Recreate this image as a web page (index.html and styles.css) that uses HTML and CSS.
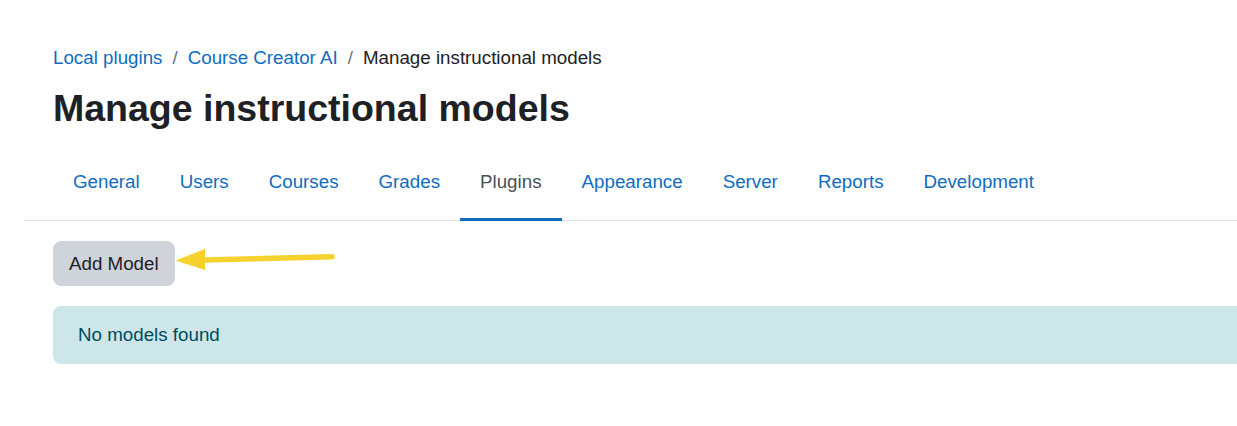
FILE: index.html
```html
<!DOCTYPE html>
<html lang="en">
<head>
<meta charset="utf-8">
<title>Manage instructional models</title>
<link rel="stylesheet" href="styles.css">
</head>
<body>
<div class="page">
  <div class="header">
    <nav class="breadcrumb">
      <a href="#">Local plugins</a>
      <span class="sep">/</span>
      <a href="#">Course Creator AI</a>
      <span class="sep">/</span>
      <span class="current">Manage instructional models</span>
    </nav>
    <h1 class="title">Manage instructional models</h1>
  </div>
  <ul class="tabs">
    <li><a class="tab" href="#">General</a></li>
    <li><a class="tab" href="#">Users</a></li>
    <li><a class="tab" href="#">Courses</a></li>
    <li><a class="tab" href="#">Grades</a></li>
    <li><a class="tab active" href="#">Plugins</a></li>
    <li><a class="tab" href="#">Appearance</a></li>
    <li><a class="tab" href="#">Server</a></li>
    <li><a class="tab" href="#">Reports</a></li>
    <li><a class="tab" href="#">Development</a></li>
  </ul>
  <div class="content">
    <div class="actions">
      <button class="btn">Add Model</button>
      <svg class="arrow" width="165" height="30" viewBox="0 0 165 30" aria-hidden="true">
        <line x1="28" y1="14" x2="157" y2="10.7" stroke="#f6d22f" stroke-width="5.5" stroke-linecap="round"/>
        <polygon points="0.5,14.5 30,3 30,24" fill="#f6d22f"/>
      </svg>
    </div>
    <div class="alert">No models found</div>
  </div>
</div>
</body>
</html>
```
FILE: styles.css
```css
html, body {
  margin: 0;
  padding: 0;
  background: #fff;
}
body {
  font-family: "Liberation Sans", Arial, sans-serif;
  font-size: 18.75px;
  line-height: 1.5;
  color: #1d2125;
}
a {
  color: #0f6cbf;
  text-decoration: none;
}
.page {
  padding: 44px 0 0 24px;
}
.header {
  padding-left: 29px;
}
.breadcrumb {
  display: flex;
  align-items: center;
  height: 28px;
}
.sep {
  color: #6a737b;
  padding: 0 10px;
}
.current {
  color: #1d2125;
}
.title {
  margin: 13.5px 0 0 0;
  font-size: 37.5px;
  line-height: 45px;
  font-weight: 700;
  color: #1d2125;
}
.tabs {
  list-style: none;
  margin: 15.5px 0 0 0;
  padding: 0 0 0 29px;
  display: flex;
  border-bottom: 1px solid #dee2e6;
}
.tabs li {
  margin-bottom: -1px;
}
.tab {
  display: flex;
  align-items: center;
  box-sizing: border-box;
  height: 75px;
  padding: 0 20px;
  border-bottom: 3px solid transparent;
  color: #0f6cbf;
}
.tab.active {
  color: #495057;
  border-bottom-color: #0f6cbf;
}
.content {
  padding: 20px 0 0 29px;
}
.actions {
  display: flex;
  align-items: center;
  position: relative;
  height: 45px;
}
.btn {
  font-family: inherit;
  font-size: 18.75px;
  line-height: 28px;
  color: #1d2125;
  background: #ced4da;
  border: 1px solid #ced4da;
  border-radius: 8px;
  padding: 7.5px 15px;
  height: 45px;
  cursor: pointer;
}
.arrow {
  position: absolute;
  left: 122px;
  top: 5px;
}
.alert {
  margin-top: 20px;
  background: #cce6ea;
  color: #004b5a;
  border-radius: 8px 0 0 8px;
  padding: 15px 25px;
  line-height: 28px;
}
```
